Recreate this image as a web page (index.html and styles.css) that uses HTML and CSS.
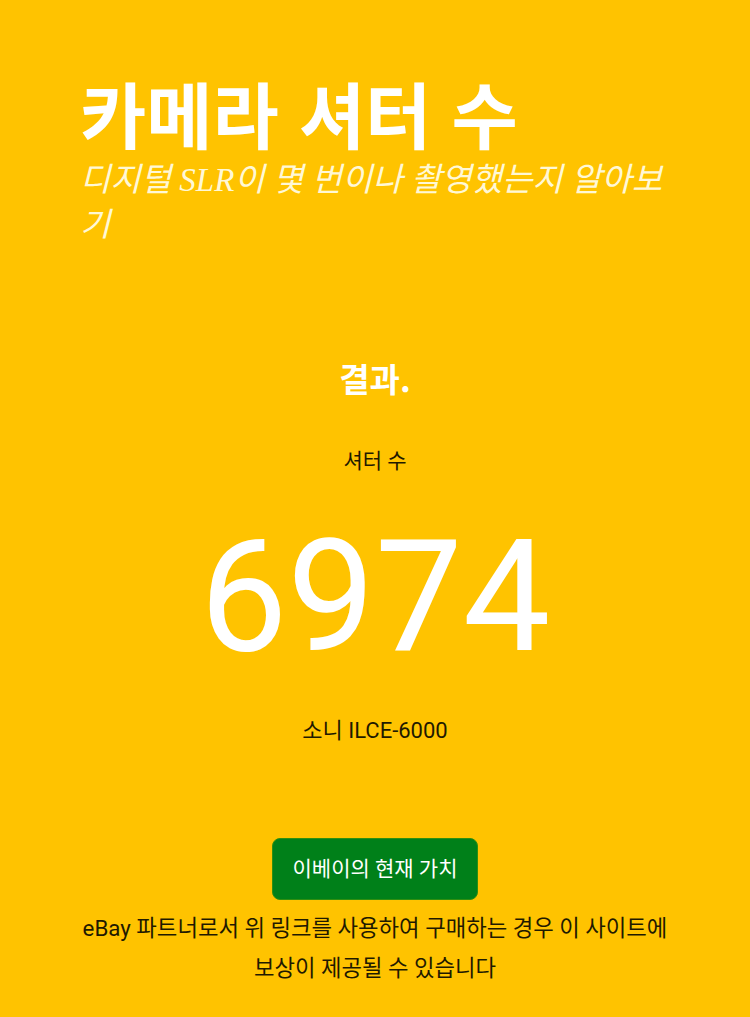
FILE: index.html
```html
<!DOCTYPE html>
<html lang="ko">
<head>
<meta charset="utf-8">
<link rel="stylesheet" href="styles.css">
</head>
<body>
<div class="page">
  <header class="hero">
    <h1 class="title">카메라 셔터 수</h1>
    <p class="subtitle">디지털 SLR이 몇 번이나 촬영했는지 알아보기</p>
  </header>
  <section class="result">
    <h2 class="result-head">결과.</h2>
    <p class="label">셔터 수</p>
    <p class="count">6974</p>
    <p class="model">소니 ILCE-6000</p>
    <a class="ebay-btn">이베이의 현재 가치</a>
    <p class="note">eBay 파트너로서 위 링크를 사용하여 구매하는 경우 이 사이트에 보상이 제공될 수 있습니다</p>
  </section>
</div>
</body>
</html>
```
FILE: styles.css
```css
html, body {
  margin: 0;
  padding: 0;
  background: #ffc300;
}
body {
  font-family: Roboto, "Noto Sans CJK KR", sans-serif;
  width: 750px;
  height: 1017px;
  overflow: hidden;
}
.page {
  padding: 0 80px;
}
.hero {
  padding-top: 66px;
}
.title {
  margin: 0;
  color: #fff;
  font-family: "Noto Sans CJK KR", sans-serif;
  font-size: 72px;
  font-weight: 700;
  line-height: 92px;
  letter-spacing: 0;
}
.subtitle {
  margin: 0;
  color: #fff8d6;
  font-family: "Liberation Serif", "Noto Sans CJK KR", serif;
  font-style: italic;
  font-size: 33px;
  line-height: 45px;
  width: 600px;
}
.result {
  display: flex;
  flex-direction: column;
  align-items: center;
  text-align: center;
  padding-top: 108px;
}
.result-head {
  margin: 0;
  color: #fff;
  font-family: "Noto Sans CJK KR", sans-serif;
  font-size: 33px;
  font-weight: 700;
  line-height: 44px;
}
.label {
  margin: 46px 0 0;
  color: #1f1a00;
  font-size: 21px;
  line-height: 30px;
}
.count {
  margin: 36px 0 0;
  color: #fff;
  font-family: Roboto, "Noto Sans", sans-serif;
  font-size: 156px;
  line-height: 170px;
}
.model {
  margin: 34px 0 0;
  color: #1f1a00;
  font-size: 22px;
  line-height: 30px;
}
.ebay-btn {
  margin-top: 92px;
  display: inline-block;
  background: #008019;
  color: #fff;
  font-size: 21px;
  line-height: 60px;
  padding: 0 20px;
  border-radius: 8px;
  border: 1px solid #2f8f10;
}
.note {
  margin: 8px -10px 0;
  color: #1f1a00;
  font-size: 22.3px;
  line-height: 40px;
  word-break: keep-all;
}
```
